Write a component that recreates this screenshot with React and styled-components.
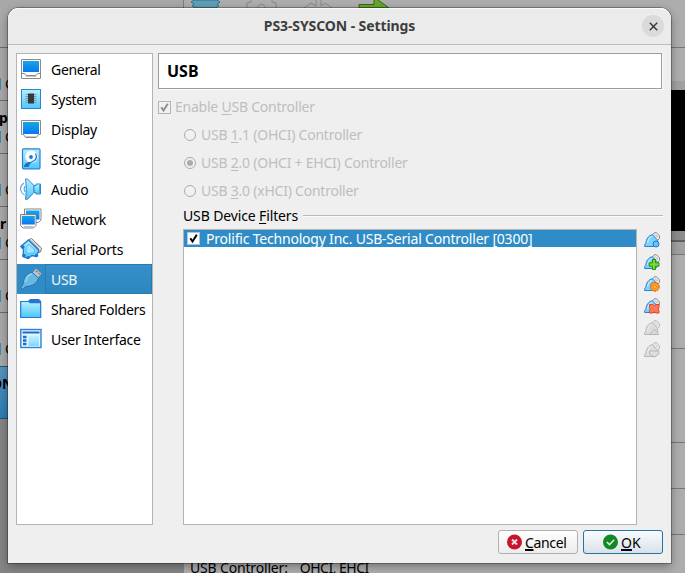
import React from "react";
import styled, { createGlobalStyle, css } from "styled-components";

const Global = createGlobalStyle`
  * { box-sizing: border-box; }
  html, body { margin: 0; padding: 0; overflow: hidden; }
  body { font: 14px/20px "Noto Sans", "Open Sans", sans-serif; color: #000; }
`;

const Desktop = styled.div`
  position: relative;
  width: 685px;
  height: 573px;
  overflow: hidden;
  display: grid;
  grid-template-columns: 184px 1fr;
  background: #adadad;
`;

/* ---------- window behind the dialog ---------- */
const MachineList = styled.div`
  display: flex;
  flex-direction: column;
  background: #858585;
`;
const ListHead = styled.div`
  height: 47px;
  background: #a8a8a8;
  border-right: 1px solid #7c7c7c;
`;
const Machine = styled.div`
  height: ${(p) => (p.$tall ? 54 : 53)}px;
  flex: none;
  border-top: 1px solid ${(p) => (p.$selected ? "#1c567c" : "#6a6a6a")};
  border-bottom: ${(p) => (p.$selected ? "1px solid #1c567c" : "0")};
  background: ${(p) => (p.$selected ? "linear-gradient(#5a94bd, #2b7bb4)" : "#a8a8a8")};
  padding-top: 7px;
`;
const MachineName = styled.div`
  height: 20px;
  font-weight: 700;
  margin-left: ${(p) => p.$x || 0}px;
`;
const MachineState = styled.div`
  display: flex;
  align-items: center;
  gap: 4px;
  height: 18px;
  &::before {
    content: "";
    width: 1px;
    height: 12px;
    background: #3d8bb0;
  }
`;
const Details = styled.div`
  display: flex;
  flex-direction: column;
  min-width: 0;
`;
const Tools = styled.div`
  height: 47px;
  flex: none;
  padding-left: 6px;
  display: flex;
  align-items: flex-start;
  gap: 25px;
  svg { display: block; flex: none; }
`;
const Section = styled.div`
  height: ${(p) => p.$h}px;
  flex: none;
  border-top: 1px solid #777;
`;
const Preview = styled.div`
  height: 141px;
  flex: none;
  background: #000;
`;
const PreviewEdge = styled.div`
  height: ${(p) => p.$h}px;
  flex: none;
  background: ${(p) => (p.$line ? "#8c8c8c" : "#a0a0a0")};
  border-bottom: ${(p) => (p.$line ? "2px solid #606060" : "0")};
`;
const UsbSection = styled(Section)`
  display: flex;
  align-items: flex-end;
  gap: 12px;
  padding-left: 6px;
  line-height: 10px;
`;
const Detail = styled.span`
  letter-spacing: ${(p) => p.$ls}px;
`;

/* ---------- dialog ---------- */
const Dialog = styled.section`
  position: absolute;
  left: 8px;
  top: 8px;
  width: 663px;
  height: 555px;
  display: flex;
  flex-direction: column;
  background: #efefef;
  border-radius: 11px 11px 0 0;
  box-shadow: 0 0 0 1px rgba(0, 0, 0, 0.28), 0 3px 10px rgba(0, 0, 0, 0.36);
`;
const TitleBar = styled.header`
  height: 37px;
  flex: none;
  display: grid;
  grid-template-columns: 1fr auto 1fr;
  align-items: center;
  padding: 0 7px;
  background: #ebebeb;
  border-bottom: 1px solid #bcbcbc;
  border-radius: 11px 11px 0 0;
  box-shadow: inset 0 1px 0 #fbfbfb;
`;
const Title = styled.h1`
  grid-column: 2;
  margin: 0;
  font-size: 14px;
  font-weight: 700;
  line-height: 20px;
  color: #3d3d3d;
  letter-spacing: -0.1px;
`;
const CloseButton = styled.button`
  justify-self: end;
  width: 22px;
  height: 22px;
  border: 0;
  border-radius: 50%;
  padding: 0;
  background: #dadada;
  display: grid;
  place-items: center;
`;
const Body = styled.div`
  display: flex;
  gap: 5px;
  height: 480px;
  padding: 8px 8px 0;
`;
const Nav = styled.nav`
  width: 137px;
  height: 472px;
  flex: none;
  border: 1px solid #b4b4b4;
  background: #fff;
`;
const NavItem = styled.a`
  display: flex;
  height: 30px;
  padding-left: 3px;
  svg { flex: none; margin: 4px 3px 0 0; }
  ${(p) => p.$active && css`
    background: #308cc6;
    color: #f1f5f9;
  `}
`;
const NavLabel = styled.span`
  flex: 1;
  height: 30px;
  line-height: 32px;
  padding-left: 6px;
  white-space: nowrap;
  letter-spacing: ${(p) => p.$ls}px;
  ${(p) => p.$active && css`
    line-height: 30px;
    border: 1px solid #2a7aad;
    padding-left: 5px;
    background: linear-gradient(#3590cb, #2d86bf);
  `}
`;
const Page = styled.main`
  width: 505px;
  height: 472px;
  display: flex;
  flex-direction: column;
`;
const Heading = styled.h2`
  flex: none;
  width: 504px;
  height: 36px;
  margin: 0 0 4px;
  padding-left: 8px;
  border: 1px solid #9c9c9c;
  background: #fff;
  box-shadow: 1px 1px 0 #fafafa;
  font-size: 16px;
  font-weight: 700;
  line-height: 34px;
`;
const Option = styled.label`
  display: flex;
  align-items: center;
  gap: ${(p) => (p.$sub ? 5 : 4)}px;
  height: 28px;
  flex: none;
  padding-left: ${(p) => (p.$sub ? 26 : 0)}px;
  color: #bebebe;
  letter-spacing: -0.23px;
  white-space: nowrap;
`;
const Check = styled.span`
  width: 13px;
  height: 13px;
  flex: none;
  display: grid;
  place-items: center;
  border: 1px solid ${(p) => (p.$on ? "#a9c6d9" : "#b4b4b4")};
  background: ${(p) => (p.$on ? "#fff" : "#f1f1f1")};
  color: ${(p) => (p.$on ? "#000" : "#8e8e8e")};
`;
const Radio = styled.span`
  width: 12px;
  height: 12px;
  flex: none;
  display: grid;
  place-items: center;
  border: 1px solid #acacac;
  border-radius: 50%;
  background: #f1f1f1;
  &::after {
    content: "";
    width: 6px;
    height: 6px;
    border-radius: 50%;
    background: ${(p) => (p.$on ? "#acacac" : "transparent")};
  }
`;
const Key = styled.span`
  text-decoration: underline;
  text-decoration-thickness: ${(p) => p.$w || 1}px;
  text-underline-offset: ${(p) => (p.$w ? 1 : 2)}px;
  text-decoration-skip-ink: none;
`;
const FiltersTitle = styled.div`
  display: flex;
  align-items: center;
  gap: 5px;
  height: 22px;
  flex: none;
  margin: 0 0 2px 25px;
  letter-spacing: -0.13px;
  white-space: nowrap;
  &::after {
    content: "";
    flex: 1;
    height: 2px;
    margin-bottom: 1px;
    background: linear-gradient(#bababa 50%, #fbfbfb 50%);
  }
`;
const Filters = styled.div`
  display: flex;
  gap: 7px;
  flex: 1;
  padding-left: 25px;
`;
const FilterList = styled.div`
  width: 454px;
  height: 296px;
  border: 1px solid #b4b4b4;
  background: #fff;
`;
const FilterRow = styled.div`
  display: flex;
  align-items: center;
  gap: 6px;
  height: 17px;
  padding-left: 3px;
  background: #308cc6;
  color: #fff;
  letter-spacing: -0.2px;
  white-space: nowrap;
`;
const FilterTools = styled.div`
  display: flex;
  flex-direction: column;
  gap: 6px;
  padding-top: 3px;
  svg { display: block; }
`;
const Footer = styled.footer`
  display: flex;
  justify-content: flex-end;
  gap: 5px;
  padding: 5px 8px 9px;
`;
const Button = styled.button`
  width: 80px;
  height: 24px;
  padding: 0 0 0 8px;
  display: flex;
  align-items: center;
  gap: 2px;
  font: inherit;
  color: #000;
  letter-spacing: -0.35px;
  border: 1px solid #b0b0b0;
  border-radius: 3px;
  background: linear-gradient(#fefefe, #ededed);
  svg { flex: none; margin-bottom: 1px; }
  ${(p) => p.$primary && css`
    padding-left: 19px;
    letter-spacing: 0;
    border-color: #2573a5;
    background: linear-gradient(#fafcfe, #d9e1e8);
  `}
`;
const ButtonLabel = styled.span`
  padding-top: 2px;
`;

/* ---------- icons ---------- */
const Tick = () => (
  <svg width="11" height="11" viewBox="0 0 11 11">
    <path d="M2.3 5.2 4.5 8.5 8.8 1.8" fill="none" stroke="currentColor" strokeWidth="2" />
  </svg>
);

const Gradients = ({ id }) => (
  <defs>
    <linearGradient id={id + "s"} x1="0" y1="0" x2="0" y2="1">
      <stop offset="0" stopColor="#1ba5e4" />
      <stop offset="1" stopColor="#0678f2" />
    </linearGradient>
    <linearGradient id={id + "c"} x1="0" y1="0" x2="0" y2="1">
      <stop offset="0" stopColor="#b5f1fe" />
      <stop offset="1" stopColor="#4cc6fb" />
    </linearGradient>
  </defs>
);

const art = {
  general: (s) => (
    <>
      <path d="M1.500 1.500h19v19h-19z" fill="#fff" stroke="#8a8a8c" />
      <rect x="3" y="3" width="16" height="11" fill={s} />
      <path d="M2 15.500h2.500l1.500 2h10l1.500-2H20" fill="none" stroke="#8a8a8c" />
      <path d="M6 18.500h10" stroke="#c4c4c4" />
    </>
  ),
  system: (s, c) => (
    <>
      <rect x="1.500" y="1.500" width="19" height="19" fill={c} stroke="#2a86d2" />
      <path d="M5.500 6.500h11M5.500 8.500h11M5.500 10.500h11M5.500 12.500h11M5.500 14.500h11" stroke="#7d99a8" />
      <rect x="8" y="5.500" width="6" height="10" fill="#35393f" />
    </>
  ),
  display: (s) => (
    <>
      <path d="M1.500 2.500h19v14h-2l-2 3h-11l-2-3h-2z" fill="#fff" stroke="#8a8a8c" />
      <rect x="3" y="4" width="16" height="12" fill={s} />
      <path d="M6 18.500h10" stroke="#c9c9c9" />
    </>
  ),
  storage: (s, c) => (
    <>
      <rect x="2.500" y=".8" width="17.500" height="20" rx="1" fill={c} stroke="#2a80d2" strokeWidth="1.200" />
      <circle cx="11.500" cy="8.500" r="6.600" fill="#f2fbff" stroke="#a6cbe5" strokeWidth=".6" />
      <circle cx="11" cy="9" r="1.900" fill="#2577c4" />
      <path d="M15.500 5.500c1.500 3 1 6-2 7.500-2.500 1-4 1.500-5.500 4.500" fill="none" stroke="#2585d8" strokeWidth="1.300" />
      <path d="M4 19c0-3 3-5.500 6.500-5L8.500 19z" fill="#2270bd" />
    </>
  ),
  audio: (s, c) => (
    <>
      <path d="M4 5C1 7 0 9 .7 12c.5 2.500 1.800 4 3.800 5M5.500 8c-1.700 1.500-1.900 4 0 6" fill="none" stroke="#53a9e4" strokeWidth="1.200" />
      <path d="M5.500 1h2L14 7.500v7L7.500 21.300h-2C6.500 14 6.500 8 5.500 1z" fill={c} stroke="#3584cb" />
      <path d="M14 7.500h2V6h4.500v10H16v-1.500h-2z" fill={c} stroke="#3584cb" />
      <path d="M19.500 7v8.500" stroke="#38a7ea" />
    </>
  ),
  network: (s) => (
    <>
      <path d="M4.500 1h16.500v11l-2.500 2.500h-14z" fill="#fff" stroke="#808386" />
      <rect x="6" y="2.500" width="13.500" height="9" fill={s} />
      <path d="M.5 6.500h15.500v11L13.500 20H3L.5 17.500z" fill="#fff" stroke="#808386" />
      <rect x="1.800" y="7.800" width="13" height="8.700" fill={s} />
      <path d="M4 18.500h9" stroke="#bcbcbc" />
    </>
  ),
  serial: (s, c) => (
    <>
      <path d="M9 1.500 11.500.5 21.500 10l-1 4-3 1z" fill="#eee" stroke="#77797b" />
      <path d="m11 2.500 8 8.500M13.500 2.500l6.500 7" stroke="#8d8f91" strokeWidth=".9" />
      <path d="M8.500 2 19 12.500 16 18.500l-4-1-4 3-5-2 .5-7L.8 8.500z" fill={c} stroke="#2478cb" strokeWidth="1.300" />
      <path d="m8.500 6 6.500 6-1.500 3-5 .5-2.500-1.500.3-4.500z" fill="#9fe5ff" stroke="#4fb0ea" strokeWidth=".8" />
      <g fill="#2272c9">
        <circle cx="3" cy="9" r="1.700" /><circle cx="4" cy="17.500" r="1.700" />
        <circle cx="16.500" cy="17.500" r="1.700" /><circle cx="8" cy="19.500" r="1.500" />
      </g>
    </>
  ),
  usb: () => (
    <>
      <path d="m12.500 4.500 3.500-4 5.500 5-3.500 4.500z" fill="#bfc8cf" stroke="#808a92" strokeWidth=".8" />
      <path d="m16 3 1.300 1.200M18.500 5l1 1" stroke="#65707a" strokeWidth="1.300" />
      <path d="M12 4.200 18.500 10c-1 4.500-5.500 8.500-12.500 8.500l-3.500 2.700-1.700-1.500L3.200 16C3.200 10 7 5 12 4.200z" fill="#67b9e3" stroke="#2474ae" />
      <path d="M5.500 14C6.500 9 9 6.500 12 6" fill="none" stroke="#92d3ed" strokeWidth="1.500" />
    </>
  ),
  folder: (s, c) => (
    <>
      <path d="M8.500 5V3l1.500-1.500h9L20.500 3v3z" fill="#2677d6" stroke="#2371cb" />
      <path d="M.7 3.500h8l1.500 1.200h10.500v14.800H.7z" fill={c} stroke="#2577cf" strokeWidth="1.200" />
    </>
  ),
  ui: (s, c) => (
    <>
      <rect x=".8" y="1.500" width="20.200" height="18" fill="#e6f6ff" stroke="#2d81d4" strokeWidth="1.400" />
      <path d="M2.500 4.500h17" stroke="#1f6bcc" strokeWidth="2" />
      <rect x="8.500" y="7.500" width="10.500" height="10.500" fill={c} opacity=".65" />
      <path d="M3 9h3.500M3 12.500h3.500M3 16h3.500" stroke="#1f6bcc" strokeWidth="2.500" />
    </>
  ),
};

const NavIcon = ({ name }) => (
  <svg width="22" height="22" viewBox="0 0 22 22">
    <Gradients id={name} />
    {art[name](`url(#${name}s)`, `url(#${name}c)`)}
  </svg>
);

const badges = {
  blank: <circle cx="12" cy="12" r="3" fill="#63c3fb" stroke="#1d78d8" />,
  add: <path d="M8.500 5.500h3v3.300H15v3.400h-3.500v3.300h-3v-3.300H5.200V8.800h3.300z" fill="#7ddc2b" stroke="#2c8a12" />,
  edit: (
    <>
      <circle cx="10.800" cy="10.800" r="4.300" fill="#ff9f2b" stroke="#d9660b" strokeDasharray="1.900 .800" strokeWidth="1.200" />
      <circle cx="10.800" cy="10.800" r="1.500" fill="#ffd35c" stroke="#e06c0a" strokeWidth=".7" />
    </>
  ),
  remove: <path d="M5.500 6.500h3l1.800 1.200L12 6.500h3v3l-1 1.500 1 1.500v2.500h-3l-1.700-1-1.800 1h-3v-2.500l1-1.500-1-1.500z" fill="#ff7858" stroke="#df3a20" strokeWidth=".9" />,
  up: <path d="M5.500 14.500 10.500 9l4.500 5.500z" fill="#d8d8d8" stroke="#b0b0b0" strokeWidth=".8" />,
  down: <path d="M5.500 9H15v3l-4.500 3-5-3z" fill="#dedede" stroke="#b0b0b0" strokeWidth=".8" />,
};

const FilterIcon = ({ kind, off }) => (
  <svg width="16" height="16" viewBox="0 0 16 16">
    <path d="M8 3.500 10.300.700h2.200L15.500 4v2.500L13 9z" fill={off ? "#e8e8e8" : "#ececec"} stroke={off ? "#b6b6b6" : "#858585"} strokeWidth=".9" />
    <path d="m11.200 2.700.8.800m.8.800.8.800" stroke={off ? "#bdbdbd" : "#777"} />
    <path d="M8.500 2.800 13 7.500c1.500 3 1 6.300-2 7H.7v-2l1.200-1.300C2 7.500 4.500 3.200 8.500 2.800z" fill={off ? "#dcdcdc" : "#7fd0fa"} stroke={off ? "#b6b6b6" : "#2a7fd0"} />
    <path d="M3.500 11C4 7.500 5.800 5 8.300 4.200" fill="none" stroke={off ? "#ececec" : "#c3ecff"} strokeWidth="1.200" />
    {badges[kind]}
  </svg>
);

const CancelIcon = () => (
  <svg width="16" height="16" viewBox="0 0 16 16">
    <circle cx="7.500" cy="8" r="7.500" fill="#c8142f" />
    <path d="m5 5.500 5 5m0-5-5 5" stroke="#f4dfe2" strokeWidth="1.900" />
  </svg>
);
const OkIcon = () => (
  <svg width="16" height="16" viewBox="0 0 16 16">
    <circle cx="7.500" cy="8" r="7.500" fill="#118822" />
    <path d="m3.800 8 2.700 2.600 4.700-4.800" fill="none" stroke="#dff3e1" strokeWidth="1.500" />
  </svg>
);

const nav = [
  ["general", "General", -0.3],
  ["system", "System", -0.35],
  ["display", "Display", -0.25],
  ["storage", "Storage", -0.22],
  ["audio", "Audio", -0.16],
  ["network", "Network", -0.19],
  ["serial", "Serial Ports", -0.2],
  ["usb", "USB", -0.3],
  ["folder", "Shared Folders", -0.26],
  ["ui", "User Interface", -0.3],
];

const machines = [
  ["", 0],
  ["p", -1],
  ["", 0],
  ["r", 0],
  ["", 0],
  ["", 0],
];

export default function App() {
  return (
    <Desktop>
      <Global />
      <MachineList>
        <ListHead />
        {machines.map(([name, x], i) => (
          <Machine key={i} $tall={i === 5}>
            <MachineName $x={x}>{name}</MachineName>
            <MachineState>C</MachineState>
          </Machine>
        ))}
        <Machine $selected>
          <MachineName $x={-9}>ON</MachineName>
        </Machine>
      </MachineList>
      <Details>
        <Tools>
          <svg width="31" height="8" viewBox="0 0 31 8">
            <path d="m4 0-3 2 3 2-2 2 4 2h19l4-2-2-2 3-2-3-2z" fill="#609fb2" stroke="#2c6c9b" />
          </svg>
          <svg width="31" height="8" viewBox="0 0 31 8">
            <path d="M5 0v2L1 3v6h29V3l-4-1V0M12 8c0-5 7-5 7 0" fill="none" stroke="#898989" />
          </svg>
          <svg width="31" height="8" viewBox="0 0 31 8">
            <path d="M14 0v6L9 3 2 8M19 0v6l4-3 7 5" fill="none" stroke="#898989" />
          </svg>
          <svg width="31" height="8" viewBox="0 0 31 8">
            <path d="M1 8V4.500h15V-3l15 11z" fill="#67a52f" stroke="#2f6a12" />
          </svg>
        </Tools>
        <Section $h={34} />
        <PreviewEdge $h={9} />
        <Preview />
        <PreviewEdge $h={11} $line />
        <PreviewEdge $h={12} />
        <Section $h={94} />
        <Section $h={94} />
        <Section $h={46} />
        <Section $h={46} />
        <UsbSection $h={39}>
          <Detail $ls={-0.17}>USB Controller:</Detail>
          <Detail $ls={-0.5}>OHCI, EHCI</Detail>
        </UsbSection>
      </Details>

      <Dialog>
        <TitleBar>
          <Title>PS3-SYSCON - Settings</Title>
          <CloseButton aria-label="Close">
            <svg width="9" height="9" viewBox="0 0 9 9">
              <path d="m.8.800 7.400 7.400m0-7.400L.8 8.200" stroke="#333" strokeWidth="1.400" />
            </svg>
          </CloseButton>
        </TitleBar>
        <Body>
          <Nav>
            {nav.map(([icon, label, ls]) => (
              <NavItem key={icon} $active={icon === "usb"}>
                <NavIcon name={icon} />
                <NavLabel $ls={ls} $active={icon === "usb"}>{label}</NavLabel>
              </NavItem>
            ))}
          </Nav>
          <Page>
            <Heading>USB</Heading>
            <Option>
              <Check><Tick /></Check>
              <span>Enable <Key>U</Key>SB Controller</span>
            </Option>
            <Option $sub><Radio /><span>USB <Key>1</Key>.1 (OHCI) Controller</span></Option>
            <Option $sub><Radio $on /><span>USB <Key>2</Key>.0 (OHCI + EHCI) Controller</span></Option>
            <Option $sub><Radio /><span>USB <Key>3</Key>.0 (xHCI) Controller</span></Option>
            <FiltersTitle><span>USB Device <Key>F</Key>ilters</span></FiltersTitle>
            <Filters>
              <FilterList>
                <FilterRow>
                  <Check $on><Tick /></Check>
                  <span>Prolific Technology Inc. USB-Serial Controller [0300]</span>
                </FilterRow>
              </FilterList>
              <FilterTools>
                <FilterIcon kind="blank" />
                <FilterIcon kind="add" />
                <FilterIcon kind="edit" />
                <FilterIcon kind="remove" />
                <FilterIcon kind="up" off />
                <FilterIcon kind="down" off />
              </FilterTools>
            </Filters>
          </Page>
        </Body>
        <Footer>
          <Button><CancelIcon /><ButtonLabel><Key $w={2}>C</Key>ancel</ButtonLabel></Button>
          <Button $primary><OkIcon /><ButtonLabel><Key $w={2}>O</Key>K</ButtonLabel></Button>
        </Footer>
      </Dialog>
    </Desktop>
  );
}
